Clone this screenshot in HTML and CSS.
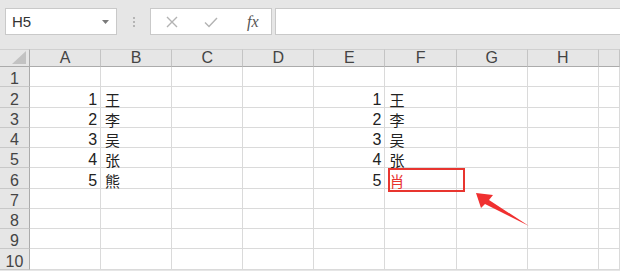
FILE: index.html
```html
<!DOCTYPE html>
<html lang="zh-CN">
<head>
  <meta charset="UTF-8" />
  <meta name="viewport" content="width=device-width, initial-scale=1.0" />
  <title>Sheet1</title>
  <link rel="stylesheet" href="styles.css">
</head>
<body>
  <div class="toolbar">
    <div class="namebox">
      <span>H5</span>
      <svg class="caret" width="7" height="4" viewBox="0 0 7 4"><path d="M0 0h7L3.5 4z"/></svg>
    </div>
    <div class="grip"><i></i><i></i><i></i></div>
    <div class="fxbox">
      <svg class="btn" width="14" height="14" viewBox="0 0 14 14"><path d="M2 2l10 10M12 2L2 12"/></svg>
      <svg class="btn" width="16" height="14" viewBox="0 0 16 14"><path d="M2 7.5l4 4L14 3"/></svg>
      <span class="fx">fx</span>
    </div>
    <div class="formula"></div>
  </div>

  <div class="sheet">
    <div class="row head">
      <div class="corner"><svg width="14" height="13" viewBox="0 0 14 13"><path d="M14 0v13H0z"/></svg></div>
      <div>A</div><div>B</div><div>C</div><div>D</div><div>E</div><div>F</div><div>G</div><div>H</div><div></div>
    </div>
    <div class="row"><div class="num">1</div><div></div><div></div><div></div><div></div><div></div><div></div><div></div><div></div><div></div></div>
    <div class="row"><div class="num">2</div><div class="val">1</div><div class="txt">王</div><div></div><div></div><div class="val">1</div><div class="txt">王</div><div></div><div></div><div></div></div>
    <div class="row"><div class="num">3</div><div class="val">2</div><div class="txt">李</div><div></div><div></div><div class="val">2</div><div class="txt">李</div><div></div><div></div><div></div></div>
    <div class="row"><div class="num">4</div><div class="val">3</div><div class="txt">吴</div><div></div><div></div><div class="val">3</div><div class="txt">吴</div><div></div><div></div><div></div></div>
    <div class="row"><div class="num">5</div><div class="val">4</div><div class="txt">张</div><div></div><div></div><div class="val">4</div><div class="txt">张</div><div></div><div></div><div></div></div>
    <div class="row"><div class="num">6</div><div class="val">5</div><div class="txt">熊</div><div></div><div></div><div class="val">5</div><div class="txt red">肖</div><div></div><div></div><div></div></div>
    <div class="row"><div class="num">7</div><div></div><div></div><div></div><div></div><div></div><div></div><div></div><div></div><div></div></div>
    <div class="row"><div class="num">8</div><div></div><div></div><div></div><div></div><div></div><div></div><div></div><div></div><div></div></div>
    <div class="row"><div class="num">9</div><div></div><div></div><div></div><div></div><div></div><div></div><div></div><div></div><div></div></div>
    <div class="row"><div class="num">10</div><div></div><div></div><div></div><div></div><div></div><div></div><div></div><div></div><div></div></div>
  </div>

  <!-- annotation over the sheet -->
  <div class="mark"></div>
  <svg class="arrow" width="620" height="271" viewBox="0 0 620 271">
    <path d="M476 193L493 195L489 200L529 226L485 204L481 208Z"/>
  </svg>
</body>
</html>
```

FILE: styles.css
```css
body {
  margin: 0;
  width: 620px;
  height: 271px;
  overflow: hidden;
  position: relative;
  background: #e6e6e6;
  font-family: "Liberation Sans", "Noto Sans CJK SC", sans-serif;
  color: #222;
}

.toolbar {
  height: 49px;
  box-sizing: border-box;
  padding: 8px 0 0 5px;
  display: flex;
  align-items: flex-start;
}

.namebox,
.fxbox,
.formula {
  height: 27px;
  box-sizing: border-box;
  background: #fff;
  border: 1px solid #c9c9c9;
}

.namebox {
  width: 112px;
  display: flex;
  align-items: center;
  justify-content: space-between;
  padding: 0 7px 0 6px;
  font-size: 15px;
  color: #333;
}

.caret {
  fill: #7a7a7a;
}

.grip {
  width: 33px;
  display: flex;
  flex-direction: column;
  align-items: center;
  gap: 2px;
  padding-top: 9px;
}

.grip i {
  width: 2px;
  height: 2px;
  background: #b5b5b5;
}

.fxbox {
  width: 122px;
  display: flex;
  align-items: center;
  padding-left: 14px;
  gap: 24px;
}

.btn path {
  fill: none;
  stroke: #b3b3b3;
  stroke-width: 1.4;
}

.fx {
  font-family: "Liberation Serif", serif;
  font-style: italic;
  font-size: 16px;
  color: #555;
  margin-left: 4px;
}

.formula {
  flex: 1;
  margin-left: 3px;
  border-right: none;
}

.sheet {
  background: #fff;
}

.row {
  display: grid;
  grid-template-columns: 30px repeat(8, 71.1px) 1fr;
  height: 20.25px;
  font-size: 16px;
  line-height: 14px;
}

.row > div {
  box-sizing: border-box;
  border-right: 1px solid #dadada;
  border-bottom: 1px solid #dadada;
  display: flex;
  align-items: flex-end;
  white-space: nowrap;
}

.row.head {
  height: 18px;
  background: #e6e6e6;
  color: #444;
  line-height: 16px;
}

.row.head > div {
  justify-content: center;
  align-items: center;
  border-top: 1px solid #d0d0d0;
  border-right: 1px solid #c4c4c4;
  border-bottom: 1px solid #ababab;
}

.row.head > .corner {
  justify-content: flex-end;
  align-items: flex-end;
  padding: 0 3px 2px 0;
  border-right-color: #ababab;
}

.corner path {
  fill: #c2c2c2;
}

.row > .num {
  justify-content: center;
  background: #e6e6e6;
  color: #444;
  border-right-color: #ababab;
  border-bottom-color: #c8c8c8;
}

.val {
  justify-content: flex-end;
  padding-right: 3px;
}

.txt {
  padding-left: 4px;
  font-family: "Noto Sans CJK SC", sans-serif;
  font-size: 15px;
}

.red {
  color: #e8332f;
}

.mark {
  position: absolute;
  left: 388px;
  top: 168px;
  width: 77px;
  height: 24px;
  box-sizing: border-box;
  border: 2px solid #e8352f;
}

.arrow {
  position: absolute;
  left: 0;
  top: 0;
  pointer-events: none;
}

.arrow path {
  fill: #f03030;
}
```
